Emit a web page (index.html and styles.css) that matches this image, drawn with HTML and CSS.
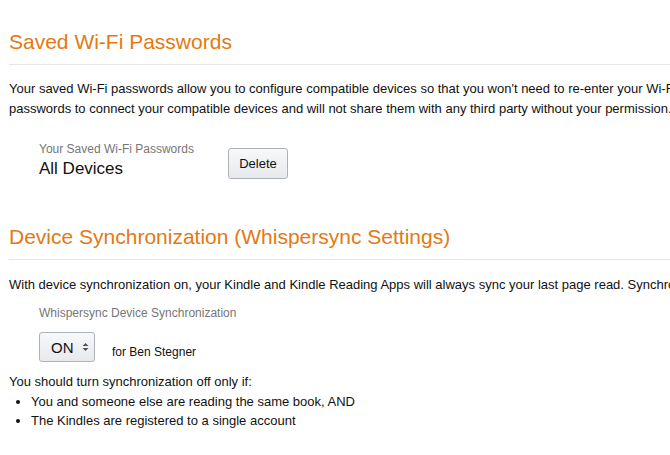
FILE: index.html
```html
<!DOCTYPE html>
<html>
<head>
<meta charset="utf-8">
<link rel="stylesheet" href="styles.css">
</head>
<body>
<div class="page">
  <section class="section">
    <h2 class="heading">Saved Wi-Fi Passwords</h2>
    <p class="desc">Your saved Wi-Fi passwords allow you to configure compatible devices so that you won't need to re-enter your Wi-Fi password on each device. Amazon will use your saved Wi-Fi<br>passwords to connect your compatible devices and will not share them with any third party without your permission.</p>
    <div class="pw-row">
      <div class="pw-info">
        <div class="label">Your Saved Wi-Fi Passwords</div>
        <div class="value">All Devices</div>
      </div>
      <button class="btn">Delete</button>
    </div>
  </section>
  <section class="section sync">
    <h2 class="heading">Device Synchronization (Whispersync Settings)</h2>
    <p class="desc">With device synchronization on, your Kindle and Kindle Reading Apps will always sync your last page read. Synchronization also keeps your annotations and bookmarks in sync.</p>
    <div class="sync-block">
      <div class="label">Whispersync Device Synchronization</div>
      <div class="sync-row">
        <div class="select">ON<span class="arrows"><svg width="7" height="10" viewBox="0 0 7 10"><path d="M0.5 4 L3.5 1 L6.5 4 Z M0.5 6 L3.5 9 L6.5 6 Z" fill="#555"/></svg></span></div>
        <span class="owner">for Ben Stegner</span>
      </div>
    </div>
    <div class="note">You should turn synchronization off only if:</div>
    <ul class="list">
      <li>You and someone else are reading the same book, AND</li>
      <li>The Kindles are registered to a single account</li>
    </ul>
  </section>
</div>
</body>
</html>
```
FILE: styles.css
```css
html, body {
  margin: 0;
  padding: 0;
  background: #fff;
}
body {
  font-family: "Liberation Sans", Arial, sans-serif;
  color: #111;
  overflow: hidden;
  width: 670px;
  height: 455px;
}
.page {
  padding: 0 0 0 9px;
  width: 1000px;
}
.section {
  padding-top: 29px;
}
.heading {
  margin: 0;
  font-weight: normal;
  font-size: 21px;
  line-height: 26px;
  color: #e47911;
  padding-bottom: 9px;
  border-bottom: 1px solid #e7e7e7;
}
.desc {
  margin: 14px 0 0;
  font-size: 13px;
  line-height: 20px;
  white-space: nowrap;
}
.pw-row {
  display: flex;
  align-items: flex-start;
  margin: 22px 0 0 30px;
}
.pw-info {
  width: 189px;
}
.label {
  font-size: 12px;
  line-height: 16px;
  color: #767676;
}
.value {
  margin-top: 1px;
  font-size: 17px;
  line-height: 22px;
  color: #111;
}
.btn {
  margin-top: 7px;
  width: 60px;
  height: 31px;
  font-family: "Liberation Sans", Arial, sans-serif;
  font-size: 13px;
  color: #111;
  border: 1px solid #adb1b8;
  border-radius: 3px;
  background: linear-gradient(#f7f8fa, #e7e9ec);
  padding: 0;
}
.sync {
  padding-top: 44px;
}
.sync .desc {
  margin-top: 15px;
}
.sync-block {
  margin: 10px 0 0 30px;
}
.sync-row {
  display: flex;
  align-items: center;
  margin-top: 11px;
}
.select {
  box-sizing: border-box;
  width: 56px;
  height: 30px;
  border: 1px solid #adb1b8;
  border-radius: 3px;
  background: linear-gradient(#f7f8fa, #e7e9ec);
  display: flex;
  align-items: center;
  padding-left: 11px;
  font-size: 15px;
  color: #111;
}
.arrows {
  margin-left: 8px;
  display: flex;
}
.owner {
  margin-left: 17px;
  margin-top: 10px;
  font-size: 12px;
}
.note {
  margin-top: 10px;
  font-size: 13px;
  line-height: 19.5px;
}
.list {
  margin: 0;
  padding-left: 22px;
  font-size: 13px;
  line-height: 19.5px;
}
```
